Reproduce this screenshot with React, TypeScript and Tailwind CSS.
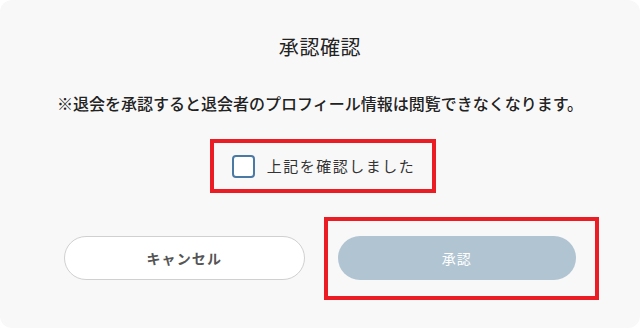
const font = { fontFamily: '"Noto Sans CJK JP", "Noto Sans", sans-serif' }

export default function App() {
  return (
    <div className="w-[640px] h-[328px] bg-white" style={font}>
      <div className="h-full rounded-[12px] bg-[#f8f8f8] flex flex-col items-center pt-[32px]">
        <h2 className="text-[20px] leading-[30px] tracking-[0.03em] text-[#222]">承認確認</h2>
        <p className="mt-[29px] text-[16px] leading-[24px] font-medium text-[#222]">
          ※退会を承認すると退会者のプロフィール情報は閲覧できなくなります。
        </p>

        {/* confirm checkbox, outlined in red */}
        <label className="mt-[24px] ml-[6px] h-[54px] flex items-center gap-[12px] pl-[18px] pr-[17px] border-4 border-[#ec1c24]">
          <span className="w-[23px] h-[23px] rounded-[4px] border-2 border-[#4a7aa3] bg-white" />
          <span className="text-[15px] tracking-[0.1em] text-[#333]">上記を確認しました</span>
        </label>

        <div className="mt-[43px] w-full px-[64px] flex gap-[33px]">
          <button className="flex-1 h-[44px] rounded-full border border-[#d0d0d0] bg-white text-[14px] font-semibold tracking-[0.08em] text-[#555]">
            キャンセル
          </button>
          <div className="relative flex-1">
            <button className="w-full h-[44px] rounded-full bg-[#b0c4d1] text-[14px] tracking-[0.08em] text-white">
              承認
            </button>
            <div className="absolute left-[-14px] right-[-23px] top-[-19px] bottom-[-20px] border-4 border-[#ec1c24] pointer-events-none" />
          </div>
        </div>
      </div>
    </div>
  )
}
